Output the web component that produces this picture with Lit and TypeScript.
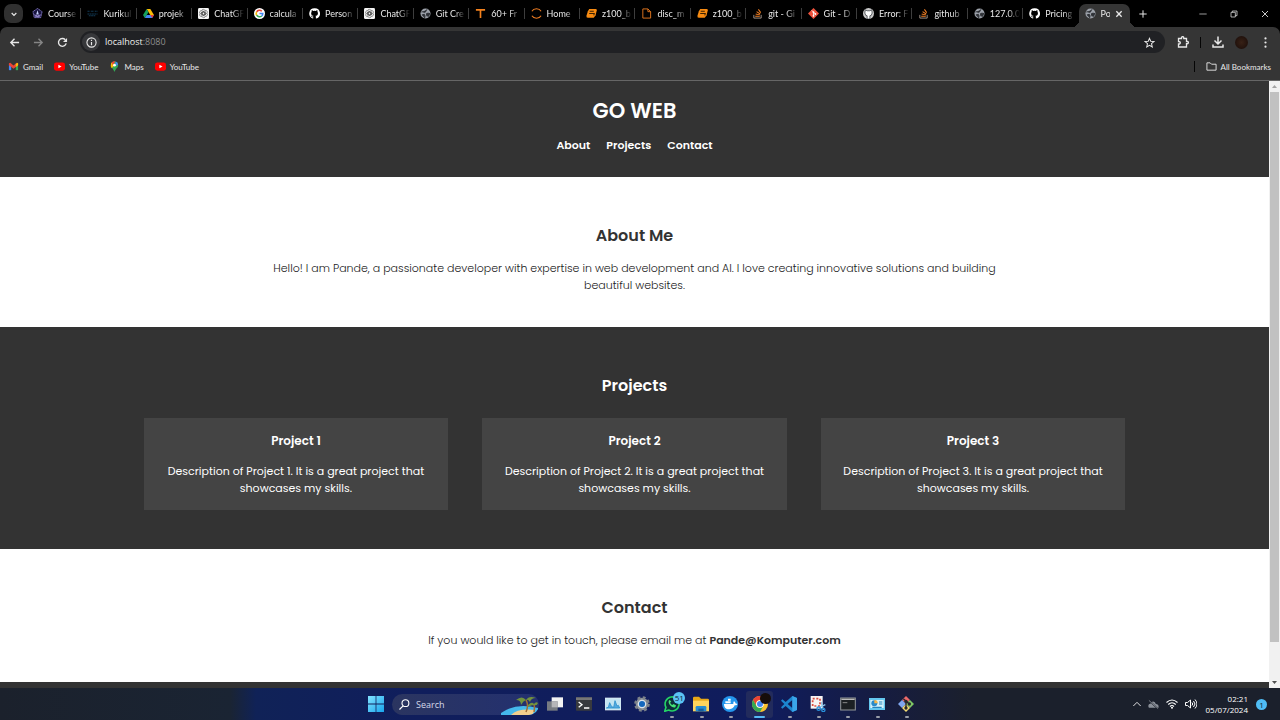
import { LitElement, html, svg, css, type TemplateResult } from "lit";
import { customElement, state } from "lit/decorators.js";

/* Each glyph is drawn on a 24-unit grid. */
const art: Record<string, TemplateResult> = {
  crest: svg`<path d="M12 1l10 7-3 13H5L2 8z" fill="#17133d" stroke="#8b80cf" stroke-width="2" stroke-dasharray="3 1"/><path d="M12 5l3 9H9z" fill="#c5cff8"/><path d="M5 15q7 5 14 0M7 19h10" stroke="#a79be5" stroke-width="2" fill="none"/>`,
  dash: svg`<path d="M1 7h6M9 7h6M17 7h6M1 13h22M4 17h14" stroke="#123a55" stroke-width="2.5" fill="none" stroke-dasharray="4 1"/>`,
  drive: svg`<path d="M8 2h8l8 13h-8z" fill="#fbbc04"/><path d="M8 2l4 7-8 13-4-7z" fill="#16a05d"/><path d="M8 15h16l-4 7H4z" fill="#4285f4"/><path d="M16 15h8l-4 7z" fill="#ea4335"/>`,
  gpt: svg`<rect width="24" height="24" rx="3" fill="#f4f4f4"/><g fill="none" stroke="#444" stroke-width="1.2">${[0, 60, 120, 180, 240, 300].map((a) => svg`<path transform="rotate(${a} 12 12)" d="M12 8.8l3 1.700V15l-3.800 2.200M8 5.200A4 4 0 0 1 15.500 6v5"/>`)}</g>`,
  google: svg`<circle cx="12" cy="12" r="12" fill="#fff"/><g fill="none" stroke-width="3.4"><path d="M17 7A7.2 7.2 0 0 0 5.8 8.4" stroke="#ea4335"/><path d="M5.8 8.4a7.2 7.2 0 0 0 0 7.2" stroke="#fbbc04"/><path d="M5.8 15.6A7.2 7.2 0 0 0 16.8 17.4" stroke="#34a853"/><path d="M12 12h7.2a7.2 7.2 0 0 1-2.4 5.4" stroke="#4285f4"/></g>`,
  github: svg`<path fill="#fff" d="M12 .5a11.5 11.5 0 0 0-3.6 22.4c.6.1.8-.3.8-.6v-2c-3.2.7-3.9-1.5-3.9-1.5-.5-1.4-1.3-1.7-1.3-1.7-1-.7.1-.7.1-.7 1.2.1 1.8 1.2 1.8 1.2 1 1.8 2.7 1.3 3.3 1 .1-.8.4-1.3.8-1.6-2.6-.3-5.3-1.3-5.3-5.7 0-1.2.5-2.3 1.2-3.1-.1-.3-.5-1.5.1-3.1 0 0 1-.3 3.2 1.2a11 11 0 0 1 5.8 0c2.200-1.500 3.200-1.200 3.200-1.200.6 1.600.2 2.800.1 3.100.8.800 1.200 1.900 1.200 3.100 0 4.400-2.700 5.400-5.300 5.700.4.400.8 1.100.8 2.200v3.200c0 .300.2.700.8.600A11.500 11.500 0 0 0 12 .5z"/>`,
  octo: svg`<circle cx="12" cy="12" r="12" fill="#c9c9c9"/><path fill="#fff" stroke="#24292f" stroke-width="1.500" d="M5 4l4 2h6l4-2 1 7-2 5-3 1v7H9v-7l-3-1-2-5z"/>`,
  globe: svg`<circle cx="12" cy="12" r="11" fill="#9da2aa"/><path d="M3 9c4-2 5 1 8 0s1-5 5-6M4 15l5-1 2 3-1 5M14 13c2-3 4-1 7-1l-2 6-4-1z" fill="#303338" stroke="#303338" stroke-width="2.200"/>`,
  tee: svg`<path d="M2 4h20M12 4v18" stroke="#f3811d" stroke-width="3.600" fill="none"/>`,
  jupyter: svg`<path d="M2 7C6 0 18 0 22 7M2 17c4 7 16 7 20 0" stroke="#ef7d22" stroke-width="2.400" fill="none"/>`,
  box: svg`<path d="M7 2h14q3 0 2.500 3L21 16l-4 5H4q-4 0-3-4L4 7z" fill="#f78b12"/><path d="M8 7h9M7 12h11l-1 4" stroke="#3c2100" stroke-width="2.200" fill="none"/>`,
  file: svg`<path d="M4 2h11l6 6v14H4zM15 2v6h6" stroke="#e87a20" stroke-width="2" fill="none"/>`,
  stack: svg`<path d="M4 15v7h16v-7" stroke="#a89a91" stroke-width="2" fill="none"/><path d="M7 18h10M8 13l9 2M10 8l8 5M14 3l5 7" stroke="#f48024" stroke-width="2.200" fill="none"/>`,
  git: svg`<path d="M12 0l12 12-12 12L0 12z" fill="#ee513b"/><path d="M8 5l8 8M12 9v9" stroke="#fff" stroke-width="1.800"/><circle cx="12" cy="9" r="2" fill="#fff"/><circle cx="12" cy="17" r="2" fill="#fff"/><circle cx="16" cy="13" r="2" fill="#fff"/>`,
  chevron: svg`<path d="M5 9l7 7 7-7" fill="none" stroke="currentColor" stroke-width="3.600"/>`,
  up: svg`<path d="M1 18L12 7l11 11" fill="none" stroke="currentColor" stroke-width="2.600"/>`,
  close: svg`<path d="M3 3l18 18M21 3L3 21" stroke="currentColor" stroke-width="2.600"/>`,
  shut: svg`<path d="M4 4l16 16M20 4L4 20" stroke="currentColor" stroke-width="4"/>`,
  plus: svg`<path d="M12 1v22M1 12h22" stroke="currentColor" stroke-width="3"/>`,
  min: svg`<path d="M1 12h22" stroke="currentColor" stroke-width="2"/>`,
  restore: svg`<path d="M3 7h13v14H3zM7 7V3h14v14h-5" fill="none" stroke="currentColor" stroke-width="2.200"/>`,
  back: svg`<path d="M22 12H4M12 4l-8 8 8 8" fill="none" stroke="currentColor" stroke-width="3"/>`,
  forward: svg`<path d="M2 12h18M12 4l8 8-8 8" fill="none" stroke="currentColor" stroke-width="3"/>`,
  reload: svg`<path d="M20 14a8.500 8.500 0 1 1-2-8" fill="none" stroke="currentColor" stroke-width="3"/><path d="M22 2v9h-9z" fill="currentColor"/>`,
  info: svg`<circle cx="12" cy="12" r="10" fill="none" stroke="currentColor" stroke-width="2.400"/><path d="M12 11v7M12 6v2.600" stroke="currentColor" stroke-width="2.600"/>`,
  star: svg`<path d="M12 3l2.700 6.300 7 .600-5.300 4.700 1.600 6.900L12 18l-6 3.500 1.600-6.900-5.300-4.700 7-.600z" fill="none" stroke="currentColor" stroke-width="2.200"/>`,
  puzzle: svg`<path d="M3 5h6V3.500a2 2 0 0 1 4.500 0V5H19v6h1.500a2 2 0 0 1 0 4.500H19V22H3v-6c5 0 5-5 0-5z" fill="none" stroke="currentColor" stroke-width="2.600"/>`,
  download: svg`<path d="M12 1v14M5 9l7 7 7-7M2 17v5h20v-5" fill="none" stroke="currentColor" stroke-width="3"/>`,
  dots: svg`<g fill="currentColor"><circle cx="12" cy="3" r="2.400"/><circle cx="12" cy="12" r="2.400"/><circle cx="12" cy="21" r="2.400"/></g>`,
  folder: svg`<path d="M2 4h7l3 3h10v13H2z" fill="none" stroke="currentColor" stroke-width="2"/>`,
  gmail: svg`<path d="M2 20V7h5v13z" fill="#4285f4"/><path d="M17 20V7h5v13z" fill="#34a853"/><path d="M2 5l3-1 7 6 7-6 3 1v4l-10 8L2 9z" fill="#ea4335"/><path d="M17 6l5-2v5l-5 4z" fill="#fbbc04"/>`,
  youtube: svg`<rect y="3" width="24" height="18" rx="5" fill="#f00"/><path d="M9.500 8v8l7-4z" fill="#fff"/>`,
  maps: svg`<path d="M4 9a8 8 0 0 1 16 0c0 6-6 7-8 15-2-8-8-9-8-15z" fill="#34a853"/><path d="M4 9a8 8 0 0 1 3-7l5 7-6 7-2-4z" fill="#fbbc04"/><path d="M6 3a8 8 0 0 1 8-2L8 9z" fill="#ea4335"/><path d="M14 1a8 8 0 0 1 6 7l-6 3z" fill="#4285f4"/><circle cx="12" cy="9" r="3" fill="#fff"/>`,
  windows: svg`<defs><linearGradient id="w" x2="1" y2="1"><stop stop-color="#83e3ff"/><stop offset="1" stop-color="#18a5ed"/></linearGradient></defs><path d="M0 0h11.400v11.400H0zM12.600 0H24v11.400H12.600zM0 12.600h11.400V24H0zM12.600 12.600H24V24H12.600z" fill="url(#w)"/>`,
  search: svg`<circle cx="14" cy="9" r="7.500" fill="none" stroke="currentColor" stroke-width="2.400"/><path d="M9 15l-8 8" stroke="currentColor" stroke-width="2.600"/>`,
  tasks: svg`<path d="M7 2h17v15H7z" fill="#f2f2f2"/><path d="M0 8h16v14H0z" fill="#777b82"/><path d="M7 8h9v9H7z" fill="#b6b6b9"/>`,
  terminal: svg`<rect y="2" width="24" height="20" rx="1" fill="#383a3e"/><path d="M0 2h24v4H0z" fill="#777"/><path d="M4 9l5 4-5 4M12 18h8" stroke="#fff" stroke-width="2" fill="none"/>`,
  monitor: svg`<rect y="3" width="24" height="18" fill="#c4e4f2" stroke="#e5eef3"/><path d="M2 18l3-1 2-7 3 6 3 1 2-10 3 8 2-1 2 4z" fill="#56a9df" stroke="#2a8fcb" stroke-width="1.200"/>`,
  gear: svg`<circle cx="12" cy="12" r="9.500" fill="#8d939a" stroke="#7d838a" stroke-width="4.500" stroke-dasharray="4 3.460"/><circle cx="12" cy="12" r="6.500" fill="#dce5ee"/><circle cx="12" cy="12" r="4.600" fill="#1568bd"/>`,
  whatsapp: svg`<path d="M1 23l2-6a10.500 10.500 0 1 1 4 4z" fill="#0c2e3a" stroke="#25d366" stroke-width="2.400"/><path d="M8 6c-4 4 4 13 9 11l1-3-4-2-1.500 1.500c-2 0-3.500-3-3-4L11 8z" fill="#45e477"/>`,
  explorer: svg`<path d="M0 3q0-2 2-2h7l3 3h10q2 0 2 2v16H0z" fill="#e7a817"/><path d="M0 7h24v16H0z" fill="#ffd55c"/><path d="M4 23v-6q0-2 2-2h12q2 0 2 2v6z" fill="#278dd1"/><path d="M8 19h8v4H8z" fill="#155f9d"/>`,
  docker: svg`<circle cx="12" cy="12" r="12" fill="#2496ed"/><path d="M3 12h14c0-2 0-3 1-4 2 1 2 2 2 3l3 1c-1 2-2 2-4 2-2 5-6 6-9 6-4 0-7-3-7-8zM5 8h8v3H5zM9 4h4v3H9z" fill="#fff"/>`,
  chrome: svg`<circle cx="12" cy="12" r="12" fill="#fbc02d"/><path d="M1.600 6A12 12 0 0 1 22.400 6H12a6 6 0 0 0-5.200 9z" fill="#ea4335"/><path d="M1.600 6A12 12 0 0 0 12 24l5.200-9A6 6 0 0 1 6.800 15z" fill="#34a853"/><circle cx="12" cy="12" r="5.800" fill="#fff"/><circle cx="12" cy="12" r="4.500" fill="#4285f4"/>`,
  code: svg`<path d="M17 0l7 3v18l-7 3L7 15l-5 4-2-2 5-5-5-5 2-2 5 4zM17 6l-7 6 7 6z" fill="#1c86cf" fill-rule="evenodd"/><path d="M17 0l7 3v18l-7 3z" fill="#3ba6ea"/>`,
  snip: svg`<path d="M1 0h18v19H1z" fill="#f7f4f3"/><path d="M4 4h11v11H4z" fill="none" stroke="#dc4b3c" stroke-width="2.600" stroke-dasharray="3 2.500"/><path d="M12 18l11-5M17 9l3 12" stroke="#8fc8ec" stroke-width="2"/><circle cx="13" cy="19" r="2.600" fill="none" stroke="#278fda" stroke-width="2"/><circle cx="20" cy="21" r="2.400" fill="none" stroke="#278fda" stroke-width="2"/>`,
  console: svg`<rect x="1" y="3" width="22" height="18" fill="#1c2023" stroke="#8d9195" stroke-width="1.600"/><path d="M2 5h20" stroke="#bbb" stroke-width="2"/><path d="M4 10h7" stroke="#888" stroke-width="1.500"/>`,
  panel: svg`<rect y="3" width="24" height="18" fill="#65c7ef"/><path d="M2 6h20v12H2z" fill="#d6f2fb"/><circle cx="8" cy="11" r="4.500" fill="#288acb"/><path d="M8 11V6a5 5 0 0 1 5 5z" fill="#f7b548"/><path d="M15 9h5M15 12h5M5 17h14" stroke="#2684be" stroke-width="1.800"/>`,
  gitbash: svg`<path d="M12 0l6 6-6 6-6-6z" fill="#ee6a6a"/><path d="M6 6l6 6-6 6-6-6z" fill="#7fa6f0"/><path d="M18 6l6 6-6 6-6-6z" fill="#7fc765"/><path d="M12 12l6 6-6 6-6-6z" fill="#f5dc72"/><path d="M8 4l9 8M12 7v12" stroke="#25282e" stroke-width="2"/><circle cx="12" cy="18" r="2.500" fill="#25282e"/><circle cx="17" cy="12" r="2.500" fill="#25282e"/><circle cx="12" cy="8" r="2.500" fill="#25282e"/>`,
  cloud: svg`<path d="M2 19q-4-7 4-9 3-7 9-3l2 4q7 0 6 8z" fill="#8b9099"/><path d="M3 4l19 18" stroke="#1b202c" stroke-width="3"/><path d="M2 3l20 18" stroke="#a5a9b0" stroke-width="1.500"/>`,
  wifi: svg`<g fill="none" stroke="currentColor" stroke-width="2.200"><path d="M1 9q11-10 22 0M4.500 13q7.500-7 15 0M8 17q4-4 8 0"/></g><circle cx="12" cy="19.500" r="2" fill="currentColor"/>`,
  volume: svg`<path d="M1 9h4l6-5v16l-6-5H1z" fill="none" stroke="currentColor" stroke-width="2"/><path d="M14 9q3 3 0 6M17 6q6 6 0 12M20 3q8 9 0 18" fill="none" stroke="currentColor" stroke-width="2"/>`,
};

const glyph = (name: string, size = "s11") =>
  html`<svg class=${size} viewBox="0 0 24 24" aria-hidden="true">${art[name]}</svg>`;

const base = css`
  * { box-sizing: border-box; }
  button, input { font: inherit; color: inherit; border: 0; background: none; padding: 0; margin: 0; outline: 0; }
  button { display: flex; align-items: center; justify-content: center; flex: none; }
  a { color: inherit; text-decoration: none; }
  svg { display: block; flex: none; }
  .s8 { width: 8px; height: 8px; }
  .s11 { width: 11px; height: 11px; }
  .s12 { width: 12px; height: 12px; }
  .s16 { width: 16px; height: 16px; }
`;

const tabs: [string, string][] = [
  ["crest", "Course"], ["dash", "Kurikul"], ["drive", "projek"], ["gpt", "ChatGF"],
  ["google", "calcula"], ["github", "Person"], ["gpt", "ChatGF"], ["globe", "Git Cre"],
  ["tee", "60+ Fr"], ["jupyter", "Home"], ["box", "z100_b"], ["file", "disc_m"],
  ["box", "z100_b"], ["stack", "git - Gi"], ["git", "Git - D"], ["octo", "Error: F"],
  ["stack", "github"], ["globe", "127.0.0"], ["github", "Pricing"],
];

@customElement("browser-chrome")
class BrowserChrome extends LitElement {
  static styles = [base, css`
    :host { display: block; flex: none; background: #000; color: #e8e8e8; font: 9px/12px Lato, "Open Sans", sans-serif; }
    .strip { display: flex; height: 27px; }
    .picker { width: 26px; padding: 4px 3px 4px 4px; display: flex; flex: none; }
    .picker button { width: 19px; height: 19px; border-radius: 7px; background: #303030; }
    .tabs { flex: 1; display: grid; grid-auto-flow: column; grid-auto-columns: minmax(0, 1fr); min-width: 0; }
    .tab { min-width: 0; display: flex; align-items: center; gap: 5px; padding: 0 2px 0 6px; position: relative; justify-content: flex-start; }
    .tab::after { content: ""; position: absolute; right: 0; top: 8px; height: 11px; width: 1px; background: #3d3d3d; }
    .label { flex: 1; min-width: 0; white-space: nowrap; text-align: left; mask-image: linear-gradient(90deg, #000 18px, transparent 30px); }
    .active { padding: 0 4px 0 0; }
    .active::after, .tab.last::after { display: none; }
    .sheet { display: flex; align-items: center; gap: 5px; flex: 1; align-self: stretch; margin-top: 4px; padding: 0 7px 4px 6px; border-radius: 7px 7px 0 0; background: #353535; min-width: 0; position: relative; }
    .sheet::before, .sheet::after { content: ""; position: absolute; bottom: 0; width: 7px; height: 7px; }
    .sheet::before { left: -7px; background: radial-gradient(circle at 0 0, transparent 7px, #353535 7px); }
    .sheet::after { right: -7px; background: radial-gradient(circle at 100% 0, transparent 7px, #353535 7px); }
    .controls { width: 146px; flex: none; display: flex; align-items: center; justify-content: space-between; padding: 0 10px 0 5px; }
    .system { display: flex; gap: 20px; }
    .system button { width: 11px; }
    .bar { display: flex; align-items: center; height: 28px; padding: 2px 9px 0; background: #353535; border-radius: 7px 7px 0 0; }
    .nav { display: flex; gap: 13px; margin-right: 12px; }
    .dim { color: #858585; }
    .omni { flex: 1; height: 22px; border-radius: 11px; background: #202124; display: flex; align-items: center; gap: 5px; padding: 0 10px 0 2px; }
    .site { width: 18px; height: 18px; border-radius: 9px; background: #37383b; }
    .address { flex: 1; min-width: 0; display: grid; align-items: center; font-family: "Open Sans", sans-serif; }
    .address input, .address span { grid-area: 1 / 1; }
    .address input { color: transparent; width: 100%; }
    .address span { pointer-events: none; color: #8d8d8d; }
    .address b { font-weight: 400; color: #efefef; }
    .tools { display: flex; align-items: center; gap: 11px; margin-left: 12px; }
    .rule { width: 1px; height: 11px; background: #050505; }
    .avatar { width: 13px; height: 13px; border-radius: 7px; background: radial-gradient(#382116, #180b08); }
    .tools .dots { width: 12px; }
    .marks { display: flex; align-items: center; height: 26px; padding: 0 9px 2px 8px; gap: 11px; background: #353535; border-bottom: 1px solid #666; }
    .mark { display: flex; align-items: center; gap: 4px; font-size: 8px; }
    .push { margin-left: auto; }
  `];

  render() {
    return html`
      <div class="strip">
        <div class="picker"><button aria-label="Search tabs">${glyph("chevron", "s8")}</button></div>
        <div class="tabs">
          ${tabs.map(([icon, name], i) => html`<button class="tab ${i === tabs.length - 1 ? "last" : ""}">${glyph(icon)}<span class="label">${name}</span></button>`)}
          <div class="tab active"><div class="sheet">${glyph("globe")}<span class="label">Po</span><button aria-label="Close tab">${glyph("shut", "s8")}</button></div></div>
        </div>
        <div class="controls">
          <button aria-label="New tab">${glyph("plus", "s8")}</button>
          <div class="system">
            <button aria-label="Minimize">${glyph("min", "s8")}</button>
            <button aria-label="Restore">${glyph("restore", "s8")}</button>
            <button aria-label="Close">${glyph("close", "s8")}</button>
          </div>
        </div>
      </div>
      <div class="bar">
        <div class="nav">
          <button aria-label="Back">${glyph("back")}</button>
          <button class="dim" aria-label="Forward">${glyph("forward")}</button>
          <button aria-label="Reload">${glyph("reload")}</button>
        </div>
        <div class="omni">
          <button class="site" aria-label="Site information">${glyph("info")}</button>
          <div class="address"><input aria-label="Address" /><span><b>localhost</b>:8080</span></div>
          <button aria-label="Bookmark this page">${glyph("star")}</button>
        </div>
        <div class="tools">
          <button aria-label="Extensions">${glyph("puzzle", "s12")}</button>
          <span class="rule"></span>
          <button aria-label="Downloads">${glyph("download", "s12")}</button>
          <button class="avatar" aria-label="Profile"></button>
          <button class="dots" aria-label="Menu">${glyph("dots")}</button>
        </div>
      </div>
      <div class="marks">
        <a class="mark" href="#">${glyph("gmail")}Gmail</a>
        <a class="mark" href="#">${glyph("youtube")}YouTube</a>
        <a class="mark" href="#">${glyph("maps")}Maps</a>
        <a class="mark" href="#">${glyph("youtube")}YouTube</a>
        <span class="rule push"></span>
        <button class="mark">${glyph("folder")}All Bookmarks</button>
      </div>`;
  }
}

@customElement("portfolio-page")
class PortfolioPage extends LitElement {
  static styles = [base, css`
    :host { display: block; flex: 1; min-width: 0; overflow: hidden; background: #fff; color: #333; text-align: center; font: 300 11px/17px Poppins, "Inter", sans-serif; }
    h1, h2, h3, p { margin: 0; }
    header, .projects, footer { background: #333; color: #fff; }
    header { padding: 13px 0 23px; }
    h1 { font-size: 21px; line-height: 33px; font-weight: 600; }
    nav { display: flex; justify-content: center; gap: 16px; padding-top: 10px; font-weight: 600; }
    section { padding: 45px 16px 33px; }
    h2 { font-size: 16px; line-height: 28px; font-weight: 600; margin-bottom: 10px; }
    .text { max-width: 732px; margin: 0 auto; color: #222; }
    .projects { padding: 45px 0 39px; }
    .cards { display: grid; grid-template-columns: repeat(3, 24%); justify-content: center; column-gap: 34px; margin-top: 18px; }
    article { background: #444; padding: 12px 20px 13px; }
    h3 { font-size: 12px; line-height: 21px; font-weight: 600; margin-bottom: 12px; }
    article p { font-weight: 400; }
    .mail { font-weight: 600; color: #333; }
    footer { padding: 16px; }
  `];

  render() {
    return html`
      <header>
        <h1>GO WEB</h1>
        <nav><a href="#about">About</a><a href="#projects">Projects</a><a href="#contact">Contact</a></nav>
      </header>
      <section id="about">
        <h2>About Me</h2>
        <p class="text">Hello! I am Pande, a passionate developer with expertise in web development and AI. I love creating innovative solutions and building beautiful websites.</p>
      </section>
      <section id="projects" class="projects">
        <h2>Projects</h2>
        <div class="cards">
          ${[1, 2, 3].map((n) => html`<article><h3>${`Project ${n}`}</h3><p>${`Description of Project ${n}. It is a great project that showcases my skills.`}</p></article>`)}
        </div>
      </section>
      <section id="contact">
        <h2>Contact</h2>
        <p class="text">If you would like to get in touch, please email me at <a class="mail" href="mailto:Pande@Komputer.com">Pande@Komputer.com</a></p>
      </section>
      <footer></footer>`;
  }
}

const apps: [string, string, boolean][] = [
  ["tasks", "Task view", false], ["terminal", "Terminal", false], ["monitor", "Resource Monitor", false],
  ["gear", "Settings", false], ["whatsapp", "WhatsApp", true], ["explorer", "File Explorer", true],
  ["docker", "Docker", true], ["chrome", "Chrome", true], ["code", "Visual Studio Code", true],
  ["snip", "Snipping Tool", true], ["console", "Command Prompt", true], ["panel", "Control Panel", true],
  ["gitbash", "Git Bash", true],
];

@customElement("task-bar")
class TaskBar extends LitElement {
  @state() query = "";

  static styles = [base, css`
    :host { display: grid; grid-template-columns: 1fr auto 1fr; flex: none; height: 32px; color: #fff; font: 9px/11px "Open Sans", "Noto Sans", sans-serif; background: linear-gradient(90deg, #1b212c 0, #1a2433 18%, #102257 20%, #101e5c 32%, #101c5c 60%, #161c40 69%, #1b202c 76%); }
    .middle { grid-column: 2; display: flex; align-items: center; padding-left: 8px; }
    .start { margin-right: 8px; }
    .find { display: flex; align-items: center; width: 147px; height: 21px; border-radius: 11px; background: linear-gradient(90deg, #2b3560, #233070); padding-left: 7px; gap: 6px; overflow: hidden; margin-right: 2px; }
    .find input { flex: 1; min-width: 0; }
    .find input::placeholder { color: #d5d9ea; opacity: 1; }
    .beach { width: 38px; height: 21px; }
    .apps { display: flex; justify-content: space-between; width: 379px; }
    .app { width: 27px; height: 27px; border-radius: 3px; position: relative; }
    .dot::after { content: ""; position: absolute; bottom: 0; left: 12px; width: 4px; height: 2px; border-radius: 1px; background: #9a9eaa; }
    .current { background: #222b5c; }
    .current::after { left: 8px; width: 11px; background: #55b9f5; }
    .count { position: absolute; right: 0; top: 1px; width: 12px; height: 12px; border-radius: 6px; background: #5bc4f5; color: #10223a; font-size: 8px; line-height: 12px; text-align: center; }
    .face { position: absolute; right: 2px; top: 2px; width: 11px; height: 11px; border-radius: 6px; background: #160d0b; }
    .tray { grid-column: 3; display: flex; align-items: center; justify-content: flex-end; gap: 7px; padding-right: 13px; }
    .clock { text-align: right; font-size: 8px; padding: 0 1px 0 2px; }
    .note { width: 11px; height: 11px; border-radius: 6px; background: #50bdf5; color: #122536; font-size: 8px; }
  `];

  render() {
    return html`
      <div class="middle">
        <button class="start" aria-label="Start">${glyph("windows", "s16")}</button>
        <label class="find">${glyph("search")}<input placeholder="Search" aria-label="Search" .value=${this.query} @input=${(e: InputEvent) => (this.query = (e.target as HTMLInputElement).value)} />
          <svg class="beach" viewBox="0 0 38 21" aria-hidden="true"><path d="M0 19q15-11 37-5v7H0z" fill="#45b9ed"/><path d="M10 21q7-7 24-5l-3 5z" fill="#f2cf8d"/><path d="M25 18q3-7 0-12M33 18q1-4 0-8" stroke="#a16d35" stroke-width="1.500" fill="none"/><path d="M15 6q6-5 10 0 3-5 10-2-5 0-6 4-2-3-4-2-3 1-5 5 0-5-5-5M27 11q4-4 6-1 2-3 4-1-1 3-4 2-3 0-6 2z" fill="#72923d"/></svg>
        </label>
        <div class="apps">
          ${apps.map(([icon, name, open]) => html`<button class="app ${open ? "dot" : ""} ${icon === "chrome" ? "current" : ""}" aria-label=${name}>${glyph(icon, "s16")}${icon === "whatsapp" ? html`<span class="count">51</span>` : ""}${icon === "chrome" ? html`<span class="face"></span>` : ""}</button>`)}
        </div>
      </div>
      <div class="tray">
        <button aria-label="Hidden icons">${glyph("up", "s8")}</button>
        <button aria-label="OneDrive">${glyph("cloud")}</button>
        <button aria-label="Network">${glyph("wifi", "s12")}</button>
        <button aria-label="Volume">${glyph("volume", "s12")}</button>
        <div class="clock">02:21<br />05/07/2024</div>
        <button class="note" aria-label="Notifications">1</button>
      </div>`;
  }
}

@customElement("app-root")
class AppRoot extends LitElement {
  static styles = css`
    :host { display: flex; flex-direction: column; height: 100vh; overflow: hidden; }
    .view { flex: 1; min-height: 0; display: flex; }
    .scroll { width: 11px; flex: none; display: flex; flex-direction: column; align-items: center; background: #f1f1f1; }
    .scroll svg { width: 11px; height: 11px; flex: none; display: block; }
    .thumb { width: 9px; height: 94%; background: #c1c1c1; }
    .track { flex: 1; min-height: 0; }
  `;

  render() {
    return html`
      <browser-chrome></browser-chrome>
      <div class="view">
        <portfolio-page></portfolio-page>
        <div class="scroll">
          <svg viewBox="0 0 11 11"><path d="M3 7l2.500-3L8 7z" fill="#a3a3a3"/></svg>
          <div class="track"><div class="thumb"></div></div>
          <svg viewBox="0 0 11 11"><path d="M3 4l2.500 3L8 4z" fill="#505050"/></svg>
        </div>
      </div>
      <task-bar></task-bar>`;
  }
}
